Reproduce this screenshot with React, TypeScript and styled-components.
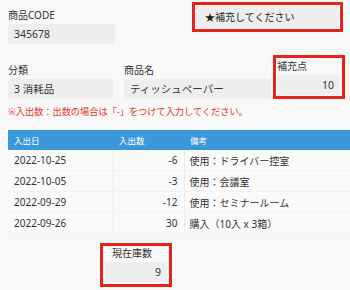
import React from "react";
import styled, { createGlobalStyle } from "styled-components";

const GlobalStyle = createGlobalStyle`
  html, body {
    margin: 0;
    padding: 0;
    background: #f8f8f8;
  }
  body {
    font-family: "Noto Sans", "Noto Sans CJK JP", sans-serif;
    color: #333;
  }
`;

const Page = styled.div`
  width: 350px;
  height: 290px;
  overflow: hidden;
  padding: 2px 0 0 8px;
  box-sizing: border-box;
`;

const TopRow = styled.div`
  display: flex;
  align-items: flex-start;
`;

const FieldRow = styled.div`
  display: flex;
  align-items: flex-end;
  margin-top: 11px;
`;

const Field = styled.div<{ $width: number; $gap?: number; $top?: number }>`
  display: flex;
  flex-direction: column;
  width: ${(p) => p.$width}px;
  margin-right: ${(p) => p.$gap ?? 0}px;
  margin-top: ${(p) => p.$top ?? 0}px;
`;

const Label = styled.div<{ $indent?: number }>`
  font-size: 10px;
  line-height: 14px;
  height: 14px;
  margin-bottom: 2px;
  padding-left: ${(p) => p.$indent ?? 0}px;
  color: #333;
`;

const Input = styled.div<{ $align?: "left" | "right" }>`
  height: 20px;
  line-height: 20px;
  background: #eeeeee;
  font-size: 10.5px;
  color: #333;
  padding: 0 6px;
  text-align: ${(p) => p.$align ?? "left"};
`;

const Highlight = styled.div`
  border: 3px solid #e8231b;
  box-sizing: border-box;
`;

const NoticeBox = styled(Highlight)`
  margin-left: auto;
  margin-right: 7px;
  width: 151px;
  height: 30px;
  padding: 1px;
`;

const NoticeInner = styled.div`
  height: 100%;
  background: #eeeeee;
  font-size: 10px;
  line-height: 22px;
  padding-left: 9px;
  color: #222;
`;

const PointBox = styled(Highlight)`
  width: 72px;
  height: 44px;
  padding: 1px 2px 0 1px;
`;

const Note = styled.div`
  color: #e8302a;
  font-size: 9.2px;
  line-height: 14px;
  margin-top: 6px;
`;

const Table = styled.table`
  margin-top: 11px;
  width: 342px;
  border-collapse: collapse;
  table-layout: fixed;
`;

const Th = styled.th<{ $width?: number }>`
  background: #3a98da;
  color: #fff;
  font-size: 8.5px;
  font-weight: normal;
  text-align: left;
  height: 20px;
  padding: 0 0 0 6px;
  ${(p) => (p.$width ? `width: ${p.$width}px;` : "")}
`;

const Td = styled.td<{ $align?: "left" | "right" }>`
  height: 20px;
  padding: 0 6px;
  font-size: 10px;
  color: #333;
  text-align: ${(p) => p.$align ?? "left"};
  border-right: 1px solid #ececec;
  border-bottom: 1px solid #f2f2f2;
  background: #fafafa;
  white-space: nowrap;
  &:last-child {
    border-right: none;
    padding-left: 5px;
  }
`;

const StockBox = styled(Highlight)`
  margin-top: 9px;
  margin-left: 92px;
  width: 72px;
  height: 44px;
  padding: 0 2px;
`;

const rows = [
  { date: "2022-10-25", qty: "-6", memo: "使用：ドライバー控室" },
  { date: "2022-10-05", qty: "-3", memo: "使用：会議室" },
  { date: "2022-09-29", qty: "-12", memo: "使用：セミナールーム" },
  { date: "2022-09-26", qty: "30", memo: "購入（10入 x 3箱）" },
];

export default function App() {
  return (
    <Page>
      <GlobalStyle />
      <TopRow>
        <Field $width={107} $top={6}>
          <Label>商品CODE</Label>
          <Input>345678</Input>
        </Field>
        <NoticeBox>
          <NoticeInner>★補充してください</NoticeInner>
        </NoticeBox>
      </TopRow>
      <FieldRow>
        <Field $width={105} $gap={11}>
          <Label>分類</Label>
          <Input>3 消耗品</Input>
        </Field>
        <Field $width={147} $gap={2}>
          <Label>商品名</Label>
          <Input>ティッシュペーパー</Input>
        </Field>
        <PointBox>
          <Label>補充点</Label>
          <Input $align="right">10</Input>
        </PointBox>
      </FieldRow>
      <Note>※入出数：出数の場合は「-」をつけて入力してください。</Note>
      <Table>
        <thead>
          <tr>
            <Th $width={99}>入出日</Th>
            <Th $width={65}>入出数</Th>
            <Th>備考</Th>
          </tr>
        </thead>
        <tbody>
          {rows.map((r) => (
            <tr key={r.date}>
              <Td>{r.date}</Td>
              <Td $align="right">{r.qty}</Td>
              <Td>{r.memo}</Td>
            </tr>
          ))}
        </tbody>
      </Table>
      <StockBox>
        <Label $indent={7}>現在庫数</Label>
        <Input $align="right">9</Input>
      </StockBox>
    </Page>
  );
}
